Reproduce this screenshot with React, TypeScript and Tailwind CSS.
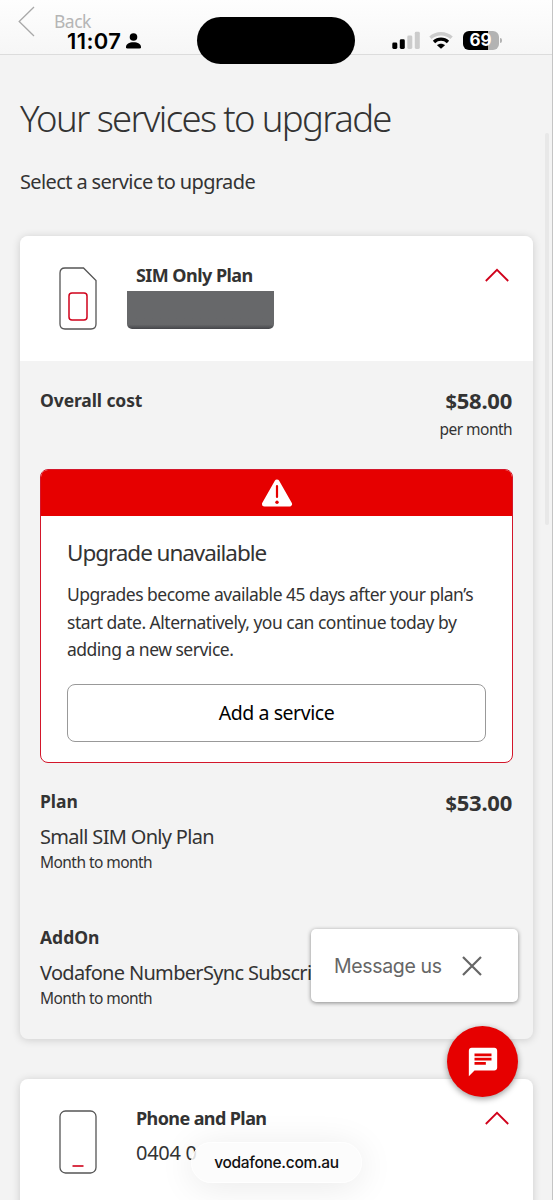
import React from 'react';
import { MdChat } from 'react-icons/md';

interface CostRowProps {
  label: string;
  name: string;
  term: string;
  price?: string;
}

function Chevron() {
  return (
    <svg className="w-6 h-[14px]" viewBox="0 0 24 14" fill="none" stroke="#d0021b" strokeWidth="1.8">
      <path d="M0.8 13L12 1.8L23.2 13" />
    </svg>
  );
}

function Price({ value }: { value: string }) {
  return (
    <div className="text-[22px] leading-7 font-bold tracking-[-0.25px]">
      <span className="text-[20px]">$</span>
      {value}
    </div>
  );
}

function CostRow({ label, name, term, price }: CostRowProps) {
  return (
    <div className="flex justify-between h-[135.5px]">
      <div className="whitespace-nowrap">
        <h4 className="text-[17.5px] leading-6 font-bold">{label}</h4>
        <p className="mt-[10px] text-[20px] leading-7 tracking-[-0.68px]">{name}</p>
        <p className="-mt-px text-[15.5px] leading-6 tracking-[-0.55px]">{term}</p>
      </div>
      {price && (
        <div className="-mt-px">
          <Price value={price} />
        </div>
      )}
    </div>
  );
}

function StatusBar() {
  return (
    <header className="relative h-[55px] shrink-0 border-b border-[#dcdcdc] bg-linear-to-b from-[#fefefe] to-[#f6f6f6]">
      <div className="absolute left-[18px] top-[6px] flex text-[#b5b5b5]">
        <svg className="w-[17px] h-[31px]" viewBox="0 0 17 31" fill="none" stroke="#a8a8a8" strokeWidth="1.3">
          <path d="M16 1L1.2 15.5L16 30" />
        </svg>
        <span className="ml-[19px] text-[17.5px] leading-[30px] tracking-[-0.5px]">Back</span>
      </div>
      <div className="absolute left-[67px] top-[29px] flex items-center font-['Inter',sans-serif] text-black">
        <span className="w-[54px] text-[22px] leading-6 font-semibold tracking-[0.4px]">11:07</span>
        <svg className="ml-[5px] w-[15px] h-4" viewBox="0 0 15 16" fill="black">
          <circle cx="7.5" cy="4" r="3.8" />
          <path d="M0 14.2C0 11 3.2 9.2 7.5 9.2S15 11 15 14.2Q15 15.6 13.4 15.6H1.6Q0 15.6 0 14.2Z" />
        </svg>
      </div>
      <div className="absolute left-[197px] top-[17px] w-[158px] h-[47px] rounded-full bg-black" />
      <div className="absolute left-[392px] top-[31px] flex items-start">
        <svg className="w-7 h-[18px]" viewBox="0 0 28 18">
          <rect x="0.3" y="11.5" width="5" height="6.5" rx="1.4" fill="#000" />
          <rect x="7.8" y="8.3" width="5" height="9.7" rx="1.4" fill="#000" />
          <rect x="15.3" y="4.5" width="5" height="13.5" rx="1.4" fill="#ccc" />
          <rect x="22.8" y="0.8" width="5" height="17.2" rx="1.4" fill="#ccc" />
        </svg>
        <svg className="ml-[9px] w-6 h-[18px]" viewBox="0 0 24 18" fill="none" strokeWidth="3.4">
          <path d="M1.4 6.8C7.4 1.3 16.6 1.3 22.6 6.8" stroke="#ccc" />
          <path d="M5 10.9C9 7.2 15 7.2 19 10.9" stroke="#000" />
          <path d="M12 17.8L8 14.2C10.2 12.2 13.8 12.2 16 14.2Z" fill="#000" />
        </svg>
        <div className="ml-[9.5px] w-[36px] h-[19px] rounded-[6px] overflow-hidden bg-linear-to-r from-black from-70% to-[#b3b3b3] to-70% text-center text-white font-['Inter',sans-serif] font-bold text-[17px] leading-[19px]">
          69
        </div>
        <div className="ml-px mt-[7px] w-[2px] h-[5px] rounded-r-full bg-[#b3b3b3]" />
      </div>
    </header>
  );
}

function UpgradeAlert() {
  return (
    <div className="w-[473px] h-[294px] rounded-[8px] border border-[#d3162a] overflow-hidden bg-white">
      <div className="h-[46px] bg-[#e60000] flex items-center justify-center">
        <svg className="w-8 h-7" viewBox="0 0 32 28">
          <path d="M16 3L28.5 25H3.5Z" fill="#fff" stroke="#fff" strokeWidth="5" strokeLinejoin="round" />
          <path d="M16 7V18" stroke="#e60000" strokeWidth="2.2" strokeLinecap="round" />
          <circle cx="16" cy="23.3" r="1.7" fill="#e60000" />
        </svg>
      </div>
      <div className="px-[26px] pt-[21px]">
        <h3 className="text-[22.5px] leading-8 tracking-[-1.05px]">Upgrade unavailable</h3>
        <p className="mt-[12px] text-[17.5px] leading-[27.5px] tracking-[-0.5px] whitespace-nowrap">
          Upgrades become available 45 days after your plan’s
          <br />
          start date. Alternatively, you can continue today by
          <br />
          adding a new service.
        </p>
        <button className="mt-5 w-full h-[58px] rounded-[8px] border border-[#999] bg-white text-[19.5px] tracking-[-0.45px] text-black">
          Add a service
        </button>
      </div>
    </div>
  );
}

export default function App() {
  return (
    <div className="relative w-[553px] h-[1200px] overflow-hidden flex flex-col bg-[#f3f3f3] text-[#333] font-['Noto_Sans',sans-serif]">
      <StatusBar />

      <main className="px-5 flex flex-col">
        <h1 className="mt-[39px] text-[36.5px] leading-[48px] font-light tracking-[-1.65px] whitespace-nowrap">
          Your services to upgrade
        </h1>
        <p className="mt-[26px] text-[20px] leading-7 tracking-[-0.62px] whitespace-nowrap">Select a service to upgrade</p>

        {/* SIM only service */}
        <section className="mt-[40px] h-[803px] rounded-[8px] overflow-hidden bg-[#f3f3f3] shadow-[0_1px_9px_rgba(0,0,0,0.16)]">
          <div className="h-[125px] bg-white flex">
            <svg className="ml-[39px] mt-[31px] w-[38px] h-[63px]" viewBox="0 0 38 63" fill="none">
              <path d="M6 1H24.5L37 13.5V57Q37 62 32 62H6Q1 62 1 57V6Q1 1 6 1Z" stroke="#555" strokeWidth="1.3" />
              <rect x="10" y="26" width="18" height="27" rx="3" stroke="#d0021b" strokeWidth="1.5" />
            </svg>
            <div className="ml-[30px] mt-[26px] flex-1">
              <h2 className="ml-[9px] text-[18px] leading-[26px] font-bold tracking-[-0.55px]">SIM Only Plan</h2>
              <div className="mt-[3px] w-[147px] h-[38px] rounded-b-[5px] bg-linear-to-b from-[#67686a] from-88% to-[#45464a]" />
            </div>
            <div className="mt-8 mr-6">
              <Chevron />
            </div>
          </div>

          <div className="pl-5 pr-[21px] pt-[25px]">
            <div className="flex justify-between h-[83px]">
              <h4 className="mt-[2px] text-[17.5px] leading-6 font-bold tracking-[-0.1px]">Overall cost</h4>
              <div className="text-right">
                <Price value="58.00" />
                <div className="mt-px text-[15.5px] leading-6 tracking-[-0.55px]">per month</div>
              </div>
            </div>
            <UpgradeAlert />
            <div className="pt-[26px]">
              <CostRow label="Plan" name="Small SIM Only Plan" term="Month to month" price="53.00" />
              <CostRow label="AddOn" name="Vodafone NumberSync Subscription" term="Month to month" />
            </div>
          </div>
        </section>

        {/* Phone service */}
        <section className="mt-10 h-[160px] rounded-t-[8px] bg-white flex shadow-[0_1px_9px_rgba(0,0,0,0.16)]">
          <svg className="ml-[39px] mt-[31px] w-[38px] h-[64px]" viewBox="0 0 38 64" fill="none">
            <rect x="1" y="1" width="36" height="62" rx="5.5" stroke="#555" strokeWidth="1.3" />
            <path d="M13.5 56H24.5" stroke="#d0021b" strokeWidth="1.6" />
          </svg>
          <div className="ml-[39px] mt-[26px] flex-1">
            <h2 className="text-[18px] leading-[26px] font-bold tracking-[-0.6px]">Phone and Plan</h2>
            <p className="mt-[8px] text-[20px] leading-7 tracking-[-0.3px]">0404 0</p>
          </div>
          <div className="mt-8 mr-6">
            <Chevron />
          </div>
        </section>
      </main>

      {/* Address pill */}
      <div className="absolute left-[191px] top-[1142px] w-[171px] h-[41px] rounded-full border border-white bg-[#fbfbfb]/85 shadow-[0_4px_36px_rgba(0,0,0,0.09)] grid place-items-center font-['Inter',sans-serif] font-medium text-[15.5px] tracking-[-0.3px] text-[#111]">
        vodafone.com.au
      </div>

      {/* Chat */}
      <div className="absolute left-[311px] top-[929px] w-[207px] h-[73px] rounded-[5px] bg-white shadow-[0_1px_4px_rgba(0,0,0,0.45)] flex items-center pl-[23px] text-[#666] font-['Inter',sans-serif]">
        <span className="mt-[2px] w-[108px] text-[19.5px] tracking-[-0.35px] whitespace-nowrap">Message us</span>
        <svg className="ml-[20px] w-5 h-5" viewBox="0 0 20 20" stroke="#666" strokeWidth="2.2">
          <path d="M1 1L19 19M19 1L1 19" />
        </svg>
      </div>
      <button className="absolute left-[447px] top-[1026px] w-[71px] h-[71px] rounded-full bg-[#e60000] shadow-[0_2px_6px_rgba(0,0,0,0.4)] grid place-items-center">
        <MdChat className="w-[34px] h-[34px] text-white" />
      </button>

      {/* Scroll indicator */}
      <div className="absolute left-[545px] top-[133px] w-1 h-[392px] rounded-full bg-[#e8e8e8]" />
      <div className="absolute right-0 top-0 w-px h-full bg-[#c4c4c4]" />
    </div>
  );
}
